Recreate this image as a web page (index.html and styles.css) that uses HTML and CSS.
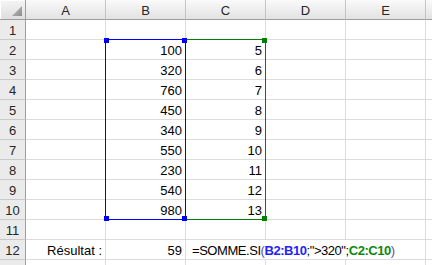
FILE: index.html
```html
<!DOCTYPE html>
<html lang="fr">
<head>
<meta charset="utf-8">
<title>SOMME.SI</title>
<link rel="stylesheet" href="styles.css">
</head>
<body>
<div class="sheet">
  <div class="corner"><svg width="10" height="10" viewBox="0 0 10 10"><defs><linearGradient id="tg" x1="0" y1="0" x2="1" y2="1"><stop offset="0" stop-color="#c2c2c2"/><stop offset="1" stop-color="#8c8c8c"/></linearGradient></defs><polygon points="10,0 10,10 0,10" fill="url(#tg)"/></svg></div>
  <div class="ch">A</div><div class="ch">B</div><div class="ch">C</div><div class="ch">D</div><div class="ch">E</div><div class="ch"></div>

  <div class="rh">1</div><div class="c"></div><div class="c"></div><div class="c"></div><div class="c"></div><div class="c"></div><div class="c"></div>
  <div class="rh">2</div><div class="c"></div><div class="c num">100</div><div class="c num">5</div><div class="c"></div><div class="c"></div><div class="c"></div>
  <div class="rh">3</div><div class="c"></div><div class="c num">320</div><div class="c num">6</div><div class="c"></div><div class="c"></div><div class="c"></div>
  <div class="rh">4</div><div class="c"></div><div class="c num">760</div><div class="c num">7</div><div class="c"></div><div class="c"></div><div class="c"></div>
  <div class="rh">5</div><div class="c"></div><div class="c num">450</div><div class="c num">8</div><div class="c"></div><div class="c"></div><div class="c"></div>
  <div class="rh">6</div><div class="c"></div><div class="c num">340</div><div class="c num">9</div><div class="c"></div><div class="c"></div><div class="c"></div>
  <div class="rh">7</div><div class="c"></div><div class="c num">550</div><div class="c num">10</div><div class="c"></div><div class="c"></div><div class="c"></div>
  <div class="rh">8</div><div class="c"></div><div class="c num">230</div><div class="c num">11</div><div class="c"></div><div class="c"></div><div class="c"></div>
  <div class="rh">9</div><div class="c"></div><div class="c num">540</div><div class="c num">12</div><div class="c"></div><div class="c"></div><div class="c"></div>
  <div class="rh">10</div><div class="c"></div><div class="c num">980</div><div class="c num">13</div><div class="c"></div><div class="c"></div><div class="c"></div>
  <div class="rh">11</div><div class="c"></div><div class="c"></div><div class="c"></div><div class="c"></div><div class="c"></div><div class="c"></div>
  <div class="rh">12</div><div class="c num">Résultat :</div><div class="c num">59</div><div class="c formula">=SOMME.SI<span class="par">(</span><b class="rb">B2:B10</b>;"&gt;320";<b class="rg">C2:C10</b><span class="par">)</span></div><div class="c"></div>
  <div class="rh"></div><div class="c"></div><div class="c"></div><div class="c"></div><div class="c"></div><div class="c"></div><div class="c"></div>

  <div class="range range-g"></div>
  <div class="range range-b"></div>
  <div class="handle hg h-g-tr"></div>
  <div class="handle hg h-g-br"></div>
  <div class="handle hb h-b-tl"></div>
  <div class="handle hb h-b-tr"></div>
  <div class="handle hb h-b-bl"></div>
  <div class="handle hb h-b-br"></div>
</div>
</body>
</html>
```

FILE: styles.css
```css
html, body {
  margin: 0;
  padding: 0;
  background: #ffffff;
}

.sheet {
  position: relative;
  display: grid;
  grid-template-columns: 26px repeat(6, 80px);
  grid-auto-rows: 20px;
  width: 432px;
  height: 265px;
  overflow: hidden;
  font-family: "Liberation Sans", Arial, sans-serif;
  font-size: 13px;
  color: #000000;
}

.c, .ch, .rh, .corner {
  box-sizing: border-box;
  padding: 2px 3px 0 3px;
  line-height: 17px;
  white-space: nowrap;
  overflow: hidden;
}

.c {
  border-right: 1px solid #dadcdd;
  border-bottom: 1px solid #dadcdd;
}

.num {
  text-align: right;
}

.formula {
  grid-column: span 3;
  padding-left: 6px;
  letter-spacing: -0.45px;
  overflow: visible;
}

.formula b {
  font-weight: bold;
}

.par {
  color: #6b45c0;
}

.rb {
  color: #1f1fff;
}

.rg {
  color: #0a8a0a;
}

.ch {
  background: linear-gradient(#fafafa, #e2e2e2);
  border-right: 1px solid #c4c4c4;
  border-bottom: 1px solid #9e9e9e;
  text-align: center;
  color: #262626;
}

.rh {
  background: #ebebeb;
  border-right: 1px solid #9e9e9e;
  border-bottom: 1px solid #c9c9c9;
  text-align: center;
  color: #262626;
  padding-left: 0;
  padding-right: 0;
}

.corner {
  display: flex;
  justify-content: flex-end;
  align-items: flex-end;
  padding: 0 3px 3px 0;
  background: linear-gradient(#f5f5f5, #dedede);
  border-right: 1px solid #9e9e9e;
  border-bottom: 1px solid #9e9e9e;
  box-shadow: inset 1px 1px 0 #ffffff;
}

.corner svg {
  display: block;
}

.range {
  position: absolute;
  top: 39px;
  width: 81px;
  height: 181px;
  box-sizing: border-box;
}

.range-b {
  left: 105px;
  border: 1px solid #0000ff;
}

.range-g {
  left: 185px;
  border: 1px solid #008000;
}

.handle {
  position: absolute;
  width: 5px;
  height: 5px;
}

.hb { background: #0000ff; }
.hg { background: #008000; }

.h-b-tl { left: 104px; top: 38px; }
.h-b-tr { left: 182px; top: 38px; }
.h-b-bl { left: 104px; top: 216px; }
.h-b-br { left: 182px; top: 216px; }
.h-g-tr { left: 262px; top: 38px; }
.h-g-br { left: 262px; top: 216px; }
```
